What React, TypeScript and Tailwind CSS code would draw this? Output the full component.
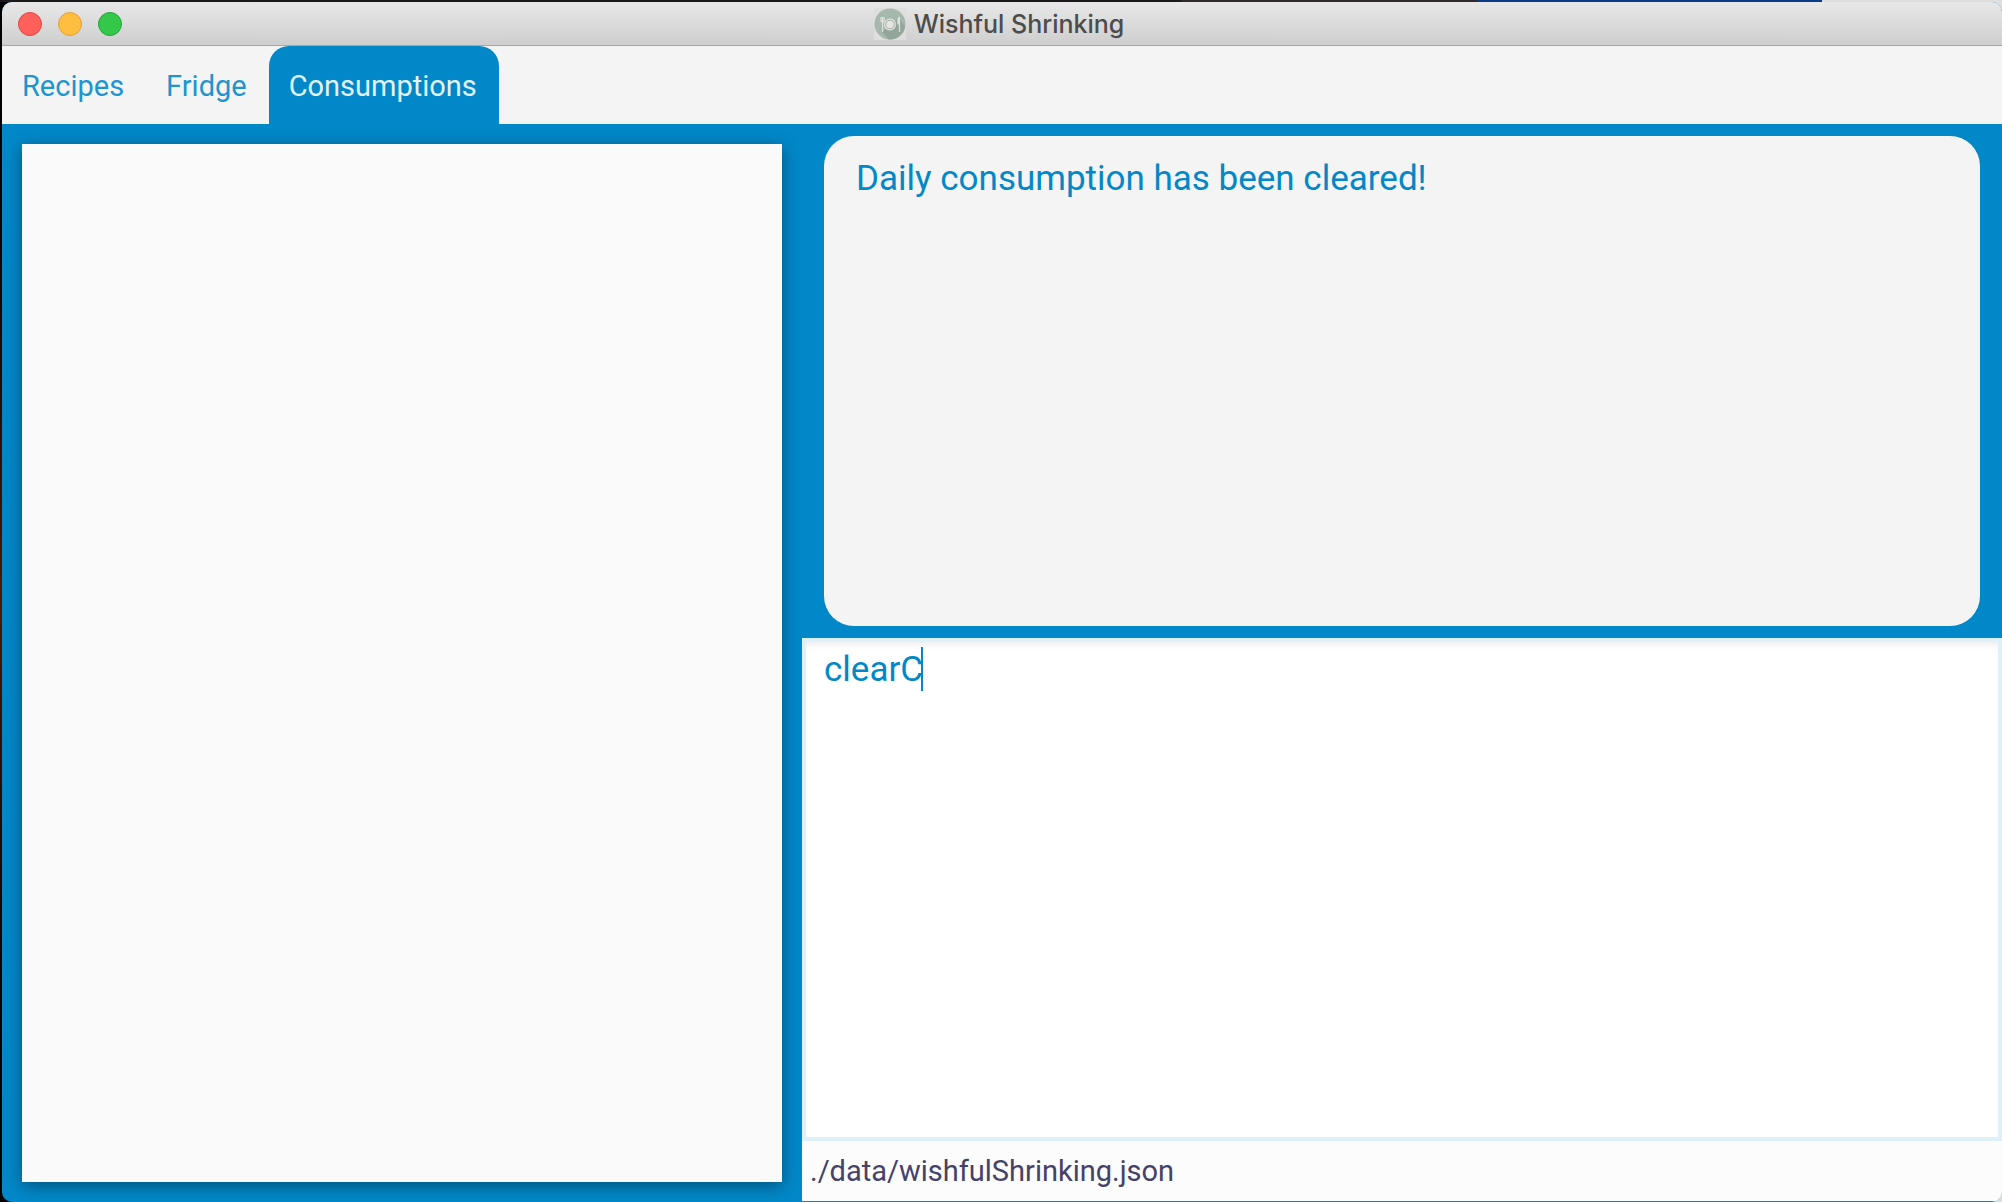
import React, { useState } from "react";

const tabs = ["Recipes", "Fridge", "Consumptions"];
const initialCommand = "clearC";

function TrafficLights() {
  return (
    <div className="flex w-[300px] items-center gap-4 pl-4">
      <button aria-label="Close" className="size-6 rounded-full border border-[#e2443f] bg-[#ff605c]" />
      <button aria-label="Minimize" className="size-6 rounded-full border border-[#dfa03a] bg-[#ffbe40]" />
      <button aria-label="Zoom" className="size-6 rounded-full border border-[#25a436] bg-[#34c84a]" />
    </div>
  );
}

function AppIcon() {
  return (
    <svg viewBox="0 0 32 32" className="size-8" aria-hidden="true">
      <rect width="32" height="32" fill="#dedede" />
      <circle cx="16" cy="16" r="15.500" fill="#a5b8ad" />
      <path d="M25 10 L31 19 A15.500 15.500 0 0 1 15 31.500 L8 24 Z" fill="#94a59c" />
      <circle cx="16" cy="16.500" r="6" fill="#e4e6df" />
      <circle cx="16" cy="16.500" r="4.800" fill="#a5b3aa" />
      <circle cx="16" cy="16.500" r="3.800" fill="#e4e6df" />
      <path d="M7 9v4q0 1 1.500 1t1.500-1V9M8.500 9v15" fill="none" stroke="#dfe2dc" strokeWidth="1.200" />
      <path d="M25.500 9v15M25 9q-2 3-1 7h1" fill="#dfe2dc" stroke="#dfe2dc" strokeWidth="1.200" />
    </svg>
  );
}

export default function App() {
  const [active, setActive] = useState("Consumptions");
  const [command, setCommand] = useState(initialCommand);
  const pristine = command === initialCommand;
  return (
    <div className="flex min-h-screen flex-col bg-linear-to-b from-black via-[#4a1c04] to-black font-[Roboto,sans-serif]">
      <div className="h-0.5 bg-[linear-gradient(90deg,#1c191c_0_59%,#2d292c_59%_73.8%,#0a3a8a_73.8%_91%,#dedede_91%)]" />
      <div className="flex grow bg-[linear-gradient(90deg,transparent_50%,#dedede_50%)] pl-0.5">
        <div className="flex grow flex-col overflow-hidden rounded-t-[10px] rounded-b-[10px] bg-[#0288c8]">
          <header className="flex h-11 items-center justify-between border-b border-[#a6a6a6] bg-linear-to-b from-[#e8e8e8] to-[#cecece]">
            <TrafficLights />
            <h1 className="flex items-center gap-2 font-[Inter,sans-serif] text-[25px] leading-8 font-medium text-[#4c4c4c]">
              <AppIcon />
              Wishful Shrinking
            </h1>
            <div className="w-[306px]" />
          </header>

          <nav role="tablist" className="flex h-[78px] bg-[#f4f4f4]">
            {tabs.map((tab) => (
              <button
                key={tab}
                role="tab"
                aria-selected={tab === active}
                onClick={() => setActive(tab)}
                className={
                  tab === active
                    ? "rounded-t-[20px] bg-[#0288c8] pt-1 pr-[22px] pl-5 text-[29px] text-[#e1f2fa]"
                    : "pt-1 pr-[22px] pl-5 text-[29px] text-[#1e95ce]"
                }
              >
                {tab}
              </button>
            ))}
          </nav>

          <main className="grid grow grid-cols-[2fr_3fr]">
            <section aria-label={active} className="flex p-5">
              <div className="grow bg-[#fafafa] shadow-[0_4px_16px_rgba(0,0,0,0.4)]" />
            </section>

            <section className="grid grid-rows-[46fr_45fr_auto]">
              <div className="flex px-[22px] py-3">
                <output className="block grow rounded-[30px] bg-[#f4f4f4] px-8 pt-[21px] text-[35px] leading-11 text-[#0288c8]">
                  Daily consumption has been cleared!
                </output>
              </div>
              <div className="relative flex border-4 border-[#def1fa] bg-white">
                <textarea
                  aria-label="Command"
                  spellCheck={false}
                  value={command}
                  onChange={(e) => setCommand(e.target.value)}
                  className={
                    pristine
                      ? "block grow resize-none px-[18px] py-1.5 text-[35px] leading-11 text-[#0288c8] caret-transparent shadow-[inset_0_6px_6px_-3px_rgba(0,0,0,0.07)] outline-none"
                      : "block grow resize-none px-[18px] py-1.5 text-[35px] leading-11 text-[#0288c8] shadow-[inset_0_6px_6px_-3px_rgba(0,0,0,0.07)] outline-none"
                  }
                />
                {pristine && (
                  <span aria-hidden="true" className="absolute top-[5px] left-[115px] h-11 w-0.5 bg-[#0288c8]" />
                )}
              </div>
              <footer className="mb-px bg-[#fcfcfc] px-2 py-2.5 text-[29px] leading-10 text-[#45426a]">
                ./data/wishfulShrinking.json
              </footer>
            </section>
          </main>
        </div>
      </div>
    </div>
  );
}
